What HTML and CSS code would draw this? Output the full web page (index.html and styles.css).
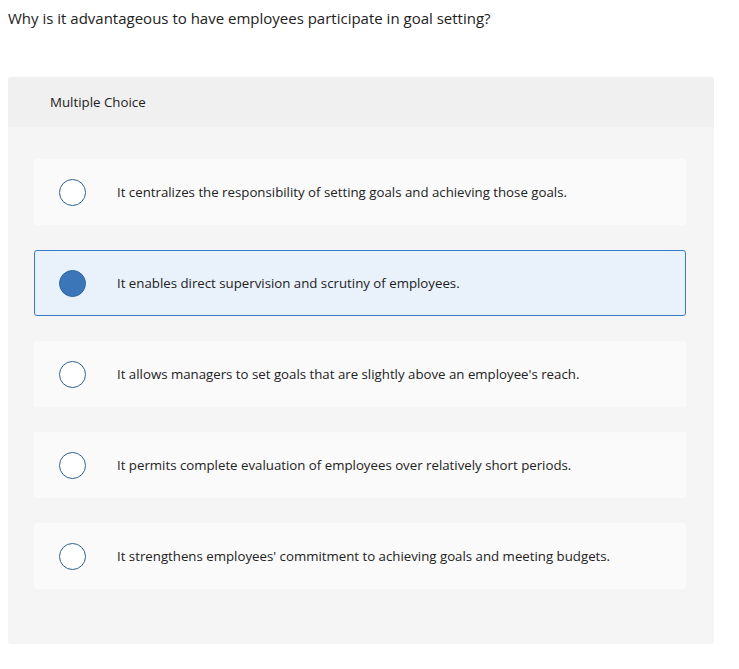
FILE: index.html
```html
<!DOCTYPE html>
<html>
<head>
<meta charset="utf-8">
<link rel="stylesheet" href="styles.css">
</head>
<body>
<p class="question">Why is it advantageous to have employees participate in goal setting?</p>
<div class="panel">
  <div class="panel-head">Multiple Choice</div>
  <div class="options">
    <div class="option"><span class="radio"></span><span class="label">It centralizes the responsibility of setting goals and achieving those goals.</span></div>
    <div class="option selected"><span class="radio"></span><span class="label">It enables direct supervision and scrutiny of employees.</span></div>
    <div class="option"><span class="radio"></span><span class="label">It allows managers to set goals that are slightly above an employee's reach.</span></div>
    <div class="option"><span class="radio"></span><span class="label">It permits complete evaluation of employees over relatively short periods.</span></div>
    <div class="option"><span class="radio"></span><span class="label">It strengthens employees' commitment to achieving goals and meeting budgets.</span></div>
  </div>
</div>
</body>
</html>
```
FILE: styles.css
```css
body {
  margin: 8px;
  font-family: "Open Sans", Lato, sans-serif;
  color: #222;
  background: #fff;
}
.question {
  margin: 0;
  font-size: 15px;
  line-height: 20px;
}
.panel {
  margin-top: 49px;
  width: 706px;
  background: #f5f5f5;
  border-radius: 3px;
  padding-bottom: 55px;
}
.panel-head {
  background: #f0f0f0;
  height: 50px;
  display: flex;
  align-items: center;
  padding-left: 42px;
  font-size: 13.3px;
  border-radius: 3px 3px 0 0;
}
.options {
  display: flex;
  flex-direction: column;
  gap: 25px;
  padding: 32px 28px 0 26px;
}
.option {
  height: 66px;
  box-sizing: border-box;
  background: #fafafa;
  border: 1px solid transparent;
  border-radius: 3px;
  display: flex;
  align-items: center;
  padding-left: 24px;
  font-size: 13.25px;
}
.option.selected {
  background: #e9f1fb;
  border-color: #3a7bc8;
}
.radio {
  width: 25px;
  height: 25px;
  border: 1.5px solid #2d5f92;
  border-radius: 50%;
  background: #fff;
  flex: none;
}
.selected .radio {
  background: #3b76b9;
  border-color: #2f65a3;
}
.label {
  margin-left: 31px;
}
```
